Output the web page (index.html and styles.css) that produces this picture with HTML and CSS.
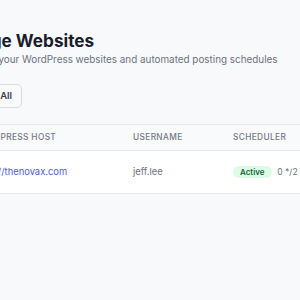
FILE: index.html
```html
<!DOCTYPE html>
<html lang="en">
<head>
    <meta charset="UTF-8">
    <title>Manage Websites</title>
    <link rel="stylesheet" href="styles.css">
</head>
<body>
<div class="page">
    <div class="head">
        <h1 class="title">Manage Websites</h1>
        <p class="sub">Manage your WordPress websites and automated posting schedules</p>
    </div>

    <div class="tools">
        <button class="btn">Select All</button>
    </div>

    <div class="card">
        <table class="list">
            <thead>
                <tr>
                    <th class="c-host">WordPress Host</th>
                    <th class="c-user">Username</th>
                    <th class="c-sched">Scheduler</th>
                    <th class="c-act">Actions</th>
                </tr>
            </thead>
            <tbody>
                <tr>
                    <td class="c-host"><a class="link" href="#">https://thenovax.com</a></td>
                    <td class="c-user muted">jeff.lee</td>
                    <td class="c-sched">
                        <span class="badge">Active</span>
                        <span class="cron">0 */2 * * *</span>
                    </td>
                    <td class="c-act"></td>
                </tr>
            </tbody>
        </table>
    </div>
</div>
</body>
</html>
```

FILE: styles.css
```css
html, body {
    margin: 0;
    background: #f8f9fb;
}

body {
    font-family: Inter, "Liberation Sans", sans-serif;
    color: #111827;
    overflow: hidden;
}

.page {
    margin-left: -44px;
    width: 600px;
    padding-top: 31px;
}

.head {
    margin-left: 2px;
}

.title {
    margin: 0 0 0 -14px;
    font-size: 17.2px;
    font-weight: 700;
    line-height: 20px;
    color: #1a1d2b;
}

.sub {
    margin: 1px 0 0;
    font-size: 9.9px;
    line-height: 14px;
    color: #6b7280;
}

.tools {
    margin-top: 17px;
    margin-left: 3px;
}

.btn {
    font-family: inherit;
    font-size: 9.5px;
    font-weight: 600;
    color: #374151;
    background: #f9fafb;
    border: 1px solid #d9dce1;
    border-radius: 5px;
    padding: 0 9px;
    height: 24px;
}

.card {
    margin-top: 16px;
    background: #fff;
    border-top: 1px solid #e7e9ed;
    border-bottom: 1px solid #e7e9ed;
}

.list {
    border-collapse: collapse;
    width: 100%;
    table-layout: fixed;
}

.list th,
.list td {
    padding: 0 0 0 17px;
    text-align: left;
}

.list th {
    background: #f9fafb;
    font-size: 8.3px;
    font-weight: 500;
    letter-spacing: 0.045em;
    text-transform: uppercase;
    color: #737985;
    height: 25px;
    border-bottom: 1px solid #e7e9ed;
}

.list td {
    font-size: 9.4px;
    height: 42px;
}

.c-host {
    width: 143px;
}

.c-user {
    width: 83px;
}

.c-sched {
    width: 150px;
}

.link {
    color: #4f5bd5;
    text-decoration: none;
}

.muted {
    color: #6b7280;
}

.badge {
    display: inline-block;
    background: #dcfce7;
    color: #166534;
    font-size: 8px;
    font-weight: 600;
    line-height: 12px;
    padding: 0 7px;
    border-radius: 999px;
}

.cron {
    margin-left: 3px;
    color: #6b7280;
    font-size: 8.6px;
}
```
